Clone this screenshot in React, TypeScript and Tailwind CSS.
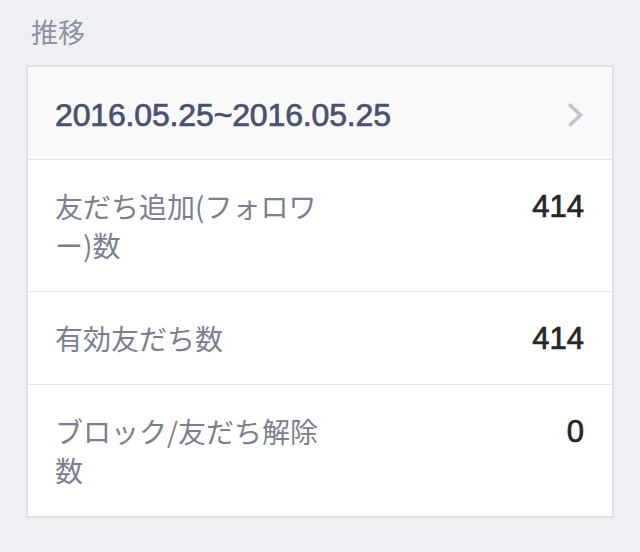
type Stat = {
  label: string;
  value: string;
};

const stats: Stat[] = [
  { label: "友だち追加(フォロワー)数", value: "414" },
  { label: "有効友だち数", value: "414" },
  { label: "ブロック/友だち解除数", value: "0" },
];

const App = () => {
  return (
    <div className="min-h-[552px] w-[640px] bg-[#eef0f4] font-['Noto_Sans_CJK_JP',sans-serif]">
      <h2 className="px-[31px] pt-[15px] pb-[16px] text-[27px] leading-[34px] text-[#8e939f]">
        推移
      </h2>

      <div className="mx-[26px] border-2 border-[#dfe1e7] bg-white">
        {/* date range row */}
        <div className="flex h-[93px] items-center justify-between border-b border-[#e3e5ea] bg-[#f9f9fa] pl-[27px] pr-[28px]">
          <span className="pt-[3px] font-['Liberation_Sans',sans-serif] text-[32px] font-normal tracking-[-0.15px] text-[#4a5170] [-webkit-text-stroke:0.7px_#4a5170]">
            2016.05.25~2016.05.25
          </span>
          <svg width="16" height="24" viewBox="0 0 16 24" fill="none" className="mt-[3px]">
            <path d="M2.5 2.5 L12.5 12 L2.5 21.5" stroke="#c2c4ce" strokeWidth="3.6" strokeLinecap="square" />
          </svg>
        </div>

        {stats.map((s, i) => (
          <div
            key={s.label}
            className={`flex items-start justify-between pl-[27px] pr-[28px] pt-[27px] pb-[26px] ${
              i < stats.length - 1 ? "border-b border-[#e6e7eb]" : ""
            }`}
          >
            <p className="w-[280px] text-[28px] leading-[39px] text-[#7b8090]">{s.label}</p>
            <span className="font-['Liberation_Sans',sans-serif] text-[31px] font-normal leading-[39px] text-[#262626] [-webkit-text-stroke:0.7px_#262626]">
              {s.value}
            </span>
          </div>
        ))}
      </div>
    </div>
  );
};

export default App;
